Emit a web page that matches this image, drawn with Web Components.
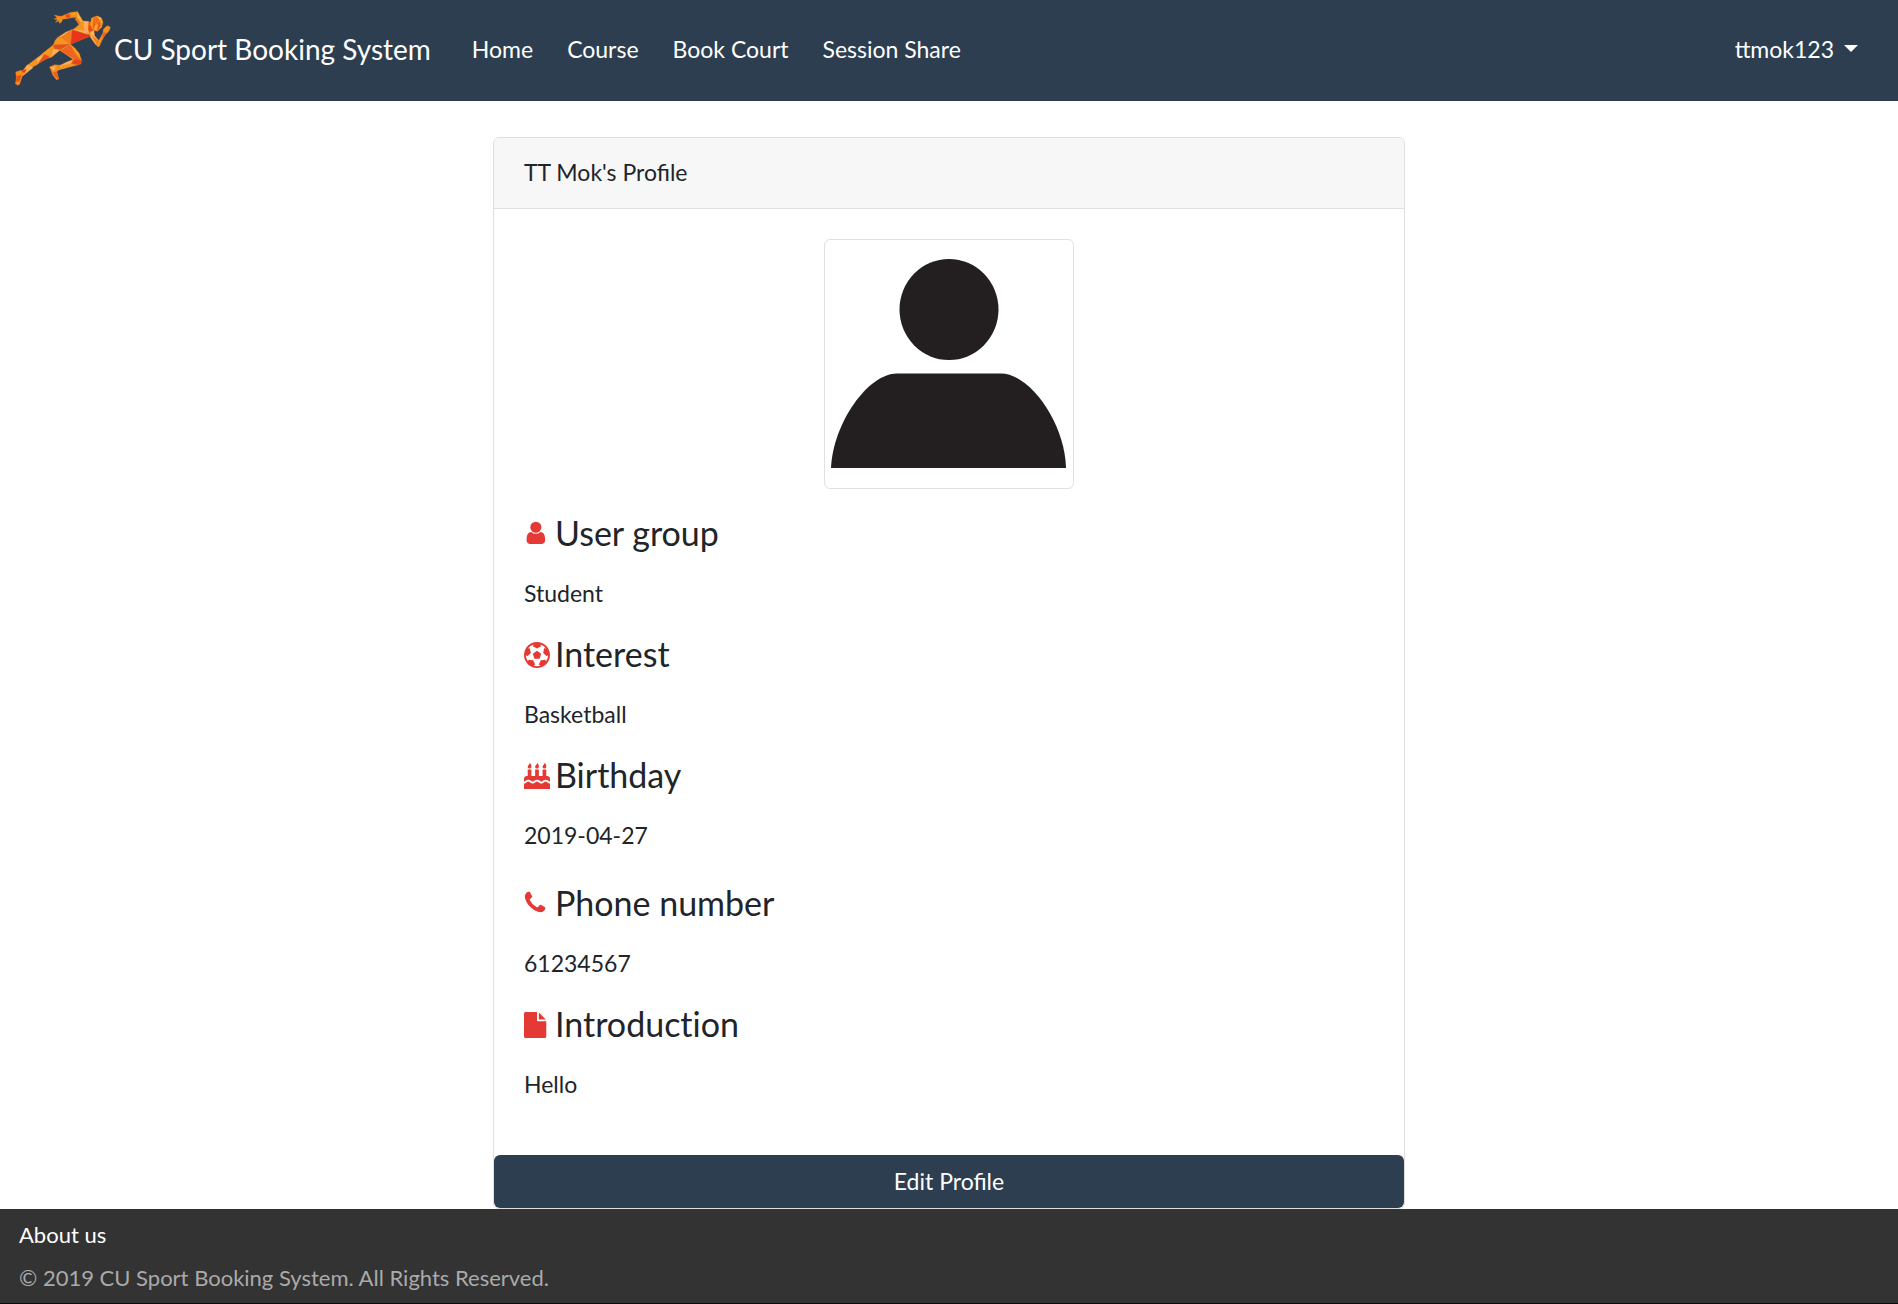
<!DOCTYPE html>
<html lang="en">
<head>
<meta charset="utf-8">
<meta name="viewport" content="width=device-width, initial-scale=1">
<title>CU Sport Booking System</title>
<style>
  body { margin: 0; background: #fff; color: #212529; font: 23px/36px Lato, sans-serif; }
</style>
</head>
<body>
<cu-app></cu-app>

<template id="app-tpl">
  <style>
    :host { display: flex; flex-direction: column; min-height: 100vh; }
    main { flex: 1; display: flex; justify-content: center; padding-top: 36px; }
    profile-card { width: 100%; max-width: 912px; }
  </style>
  <nav-bar user="ttmok123">
    <nav-link href="#home">Home</nav-link>
    <nav-link href="#course">Course</nav-link>
    <nav-link href="#court">Book Court</nav-link>
    <nav-link href="#session">Session Share</nav-link>
  </nav-bar>
  <main>
    <profile-card>
      <span slot="title">TT Mok's Profile</span>
      <user-avatar></user-avatar>
      <profile-group>
        <profile-field icon="user" label="User group">Student</profile-field>
        <profile-field icon="ball" label="Interest">Basketball</profile-field>
        <profile-field icon="cake" label="Birthday">2019-04-27</profile-field>
      </profile-group>
      <profile-group>
        <profile-field icon="phone" label="Phone number">61234567</profile-field>
        <profile-field icon="file" label="Introduction">Hello</profile-field>
      </profile-group>
    </profile-card>
  </main>
  <page-footer></page-footer>
</template>

<template id="nav-tpl">
  <style>
    :host { display: block; background: #2c3e50; color: #fff; }
    nav { display: flex; align-items: center; padding: 0 40px 0 12px; }
    .links { display: flex; flex: 1; gap: 34px; padding: 0 41px; }
    button { display: flex; align-items: center; gap: 10px; border: 0; padding: 0 0 4px; background: none; color: inherit; font: inherit; cursor: pointer; }
    .caret { border: 7px solid transparent; border-top-color: #fff; border-bottom: 0; }
  </style>
  <nav aria-label="Main">
    <brand-logo></brand-logo>
    <div class="links"><slot></slot></div>
    <button type="button" aria-haspopup="true"><span class="name"></span><span class="caret"></span></button>
  </nav>
</template>

<template id="brand-tpl">
  <style>
    :host { display: block; }
    a { display: flex; align-items: center; gap: 2px; color: #fff; font-size: 28px; text-decoration: none; white-space: nowrap; }
    svg { display: block; width: 100px; height: 101px; }
    span { padding-bottom: 4px; }
  </style>
  <a href="#home">
    <svg viewBox="36 0 300 303" aria-hidden="true" stroke-linejoin="round">
      <g stroke="#f58a1f" stroke-width="1">
        <path fill="#f68b1e" d="M232 35L237 43L229 52L211 54L188 58L184 67L178 70L177 63L166 67L173 59L162 57L171 53L163 45L175 48L184 49L208 39Z"/>
        <path fill="#f7a11b" d="M208 39L232 35L222 47Z"/>
        <path fill="#e94e1b" d="M195 45L208 40L212 53L199 55Z"/>
        <path fill="#fbb040" d="M232 35L249 63L246 75L230 53Z"/>
        <path fill="#f47b20" d="M228 50L246 75L240 78L226 58Z"/>
        <path fill="#f9a01b" d="M249 63L270 70L265 83L246 78L222 88Z"/>
        <path fill="#fbb05a" d="M250 63L266 64L272 78L270 106L256 96L246 78Z"/>
        <path fill="#ef4a1b" d="M266 66L276 70L282 84L271 108L264 88Z"/>
        <path fill="#f8a01c" d="M275 54L290 48L303 53L309 66L305 82L292 94L280 91L270 73Z"/>
        <path fill="#f26a1d" d="M280 53L290 50L300 60L290 72L278 67Z"/>
        <path fill="#fbb040" d="M290 48L303 53L307 63L298 59Z"/>
        <path fill="#ed5b1d" d="M278 67L290 72L300 62L303 78L292 93L279 88Z"/>
        <path fill="#f9a53a" d="M286 74L294 72L290 92L281 88Z"/>
        <path fill="#fbb05a" d="M270 96L282 91L284 107L296 121L295 140L286 133L271 112Z"/>
        <path fill="#f47b20" d="M276 107L296 122L294 140Z"/>
        <path fill="#f79020" d="M296 122L309 99L310 88L321 77L331 81L328 91L321 100L313 105L298 139L293 140Z"/>
        <path fill="#f15a22" d="M309 98L321 97L306 120Z"/>
        <path fill="#fbb05a" d="M246 78L265 104L216 89Z"/>
        <path fill="#f7941d" d="M222 88L250 64L252 91Z"/>
        <path fill="#e8341b" d="M216 89L265 104L272 108L211 133Z"/>
        <path fill="#f47b20" d="M216 89L211 133L184 111Z"/>
        <path fill="#fbb05a" d="M216 89L184 111L172 113L198 96Z"/>
        <path fill="#f7941d" d="M184 111L211 133L160 135L165 122L172 113Z"/>
        <path fill="#e94e1b" d="M160 134L211 133L180 150L162 145Z"/>
        <path fill="#fbb05a" d="M211 133L238 162L222 180L180 150Z"/>
        <path fill="#ef6420" d="M211 133L244 180L221 177L180 152Z"/>
        <path fill="#f9a01b" d="M211 133L225 145L238 161L244 180L229 164Z"/>
        <path fill="#e8441b" d="M219 180L244 179L243 192L232 195L213 191Z"/>
        <path fill="#fbb05a" d="M221 178L213 191L198 203L177 209L168 202L200 186Z"/>
        <path fill="#f7941d" d="M213 191L232 195L198 204L180 208L186 197Z"/>
        <path fill="#f58a1f" d="M149 201L164 194L182 196L181 206L170 215L176 237L169 239L159 226Z"/>
        <path fill="#fbb05a" d="M149 201L168 198L163 214Z"/>
        <path fill="#f15a22" d="M159 216L170 215L176 237L165 232Z"/>
        <path fill="#f7941d" d="M160 134L162 146L179 151L155 171L132 178L137 153Z"/>
        <path fill="#fbb05a" d="M160 146L180 150L151 173Z"/>
        <path fill="#f9a01b" d="M160 140L135 166L111 175L132 157Z"/>
        <path fill="#ed4b1b" d="M132 162L150 170L113 192L110 180Z"/>
        <path fill="#fbb05a" d="M111 174L133 163L113 192L90 202Z"/>
        <path fill="#f7941d" d="M110 175L114 192L78 212L83 195Z"/>
        <path fill="#fbb05a" d="M82 194L93 198L99 203L68 228L64 218Z"/>
        <path fill="#e8341b" d="M62 214L80 206L74 219L60 222Z"/>
        <path fill="#f58a1f" d="M47 216L63 211L71 219L66 231L59 253L53 256L46 251L50 235Z"/>
        <path fill="#e94e1b" d="M49 228L65 224L59 244L48 246Z"/>
      </g>
    </svg>
    <span>CU Sport Booking System</span>
  </a>
</template>

<template id="card-tpl">
  <style>
    :host { display: block; box-sizing: border-box; border: 1px solid #dfdfdf; border-radius: 6px; background: #fff; }
    header { padding: 16px 30px 18px; background: #f7f7f7; border-bottom: 1px solid #dfdfdf; border-radius: 5px 5px 0 0; }
    .body { display: flex; flex-direction: column; gap: 29px; padding: 30px 30px 53px; }
    ::slotted(user-avatar) { margin-bottom: -6px; }
    button { display: block; width: 100%; border: 0; border-radius: 6px; padding: 8px 12px 9px; background: #2c3e50; color: #fff; font: inherit; cursor: pointer; }
  </style>
  <header><slot name="title"></slot></header>
  <div class="body"><slot></slot></div>
  <button type="button">Edit Profile</button>
</template>

<template id="avatar-tpl">
  <style>
    :host { display: flex; justify-content: center; }
    svg { display: block; width: 236px; height: 236px; padding: 6px; border: 1px solid #dee2e6; border-radius: 6px; }
  </style>
  <svg viewBox="0 0 236 236" role="img" aria-label="Profile picture" fill="#231f20">
    <ellipse cx="118" cy="63.500" rx="49.500" ry="50.500"/>
    <path d="M0 222C2 177 37 127.500 66 127.500H170C199 127.500 234 177 235 222Z"/>
  </svg>
</template>

<template id="footer-tpl">
  <style>
    :host { display: block; background: #333; border-bottom: 1px solid #0c0c0c; font-size: 22px; }
    footer { display: flex; flex-direction: column; align-items: flex-start; gap: 7px; padding: 8px 19px 7px; }
    a { color: #fff; text-decoration: none; }
    p { margin: 0; color: #aaa; }
  </style>
  <footer>
    <a href="#about">About us</a>
    <p>© 2019 CU Sport Booking System. All Rights Reserved.</p>
  </footer>
</template>

<script>
  const ICONS = {
    user: ['80 80', 'M1536 1399q0 109-62.500 187t-150.500 78h-854q-88 0-150.500-78t-62.500-187q0-85 8.500-160.500t31.500-152 58.500-131 94-89 134.500-34.500q131 128 313 128t313-128q76 0 134.500 34.500t94 89 58.500 131 31.500 152 8.500 160.500zm-256-887q0 159-112.500 271.500t-271.500 112.500-271.500-112.500-112.500-271.500 112.500-271.500 271.500-112.500 271.500 112.500 112.500 271.500z'],
    ball: ['0 0', 'M609 816l287-208 287 208-109 336h-355zm287-816q182 0 348 71t286 191 191 286 71 348-71 348-191 286-286 191-348 71-348-71-286-191-191-286-71-348 71-348 191-286 286-191 348-71zm619 1350q149-203 149-454v-3l-102 89-240-224 63-323 134 12q-150-206-389-282l53 124-287 159-287-159 53-124q-239 76-389 282l135-12 62 323-240 224-102-89v3q0 251 149 454l30-132 326 40 139 298-116 69q117 39 240 39t240-39l-116-69 139-298 326-40z'],
    cake: ['0 0', 'M1792 1408v384h-1792v-384q45 0 85-14t59-27.500 47-37.500q30-27 51.500-38t56.500-11q24 0 44 7t31 15 33 27q29 25 47 38t58 27 86 14q45 0 85-14.500t58-27 48-37.500q21-19 32.500-27t31-15 43.500-7q35 0 56.500 11t51.500 38q28 24 47 37.500t59 27.500 85 14 85-14 59-27.500 47-37.500q30-27 51.500-38t56.500-11q34 0 55.500 11t51.500 38q28 24 47 37.500t59 27.500 85 14zm0-320v192q-24 0-44-7t-31-15-33-27q-29-25-47-38t-58-27-85-14q-46 0-86 14t-58 27-47 38q-22 19-33 27t-31 15-44 7q-35 0-56.500-11t-51.500-38q-29-25-47-38t-58-27-86-14q-45 0-85 14.500t-58 27-48 37.500q-21 19-32.500 27t-31 15-43.500 7q-35 0-56.500-11t-51.500-38q-28-24-47-37.500t-59-27.500-85-14q-46 0-86 14t-58 27-47 38q-22 19-33 27t-31 15-44 7v-192q0-80 56-136t136-56h64v-448h256v448h256v-448h256v448h256v-448h256v448h64q80 0 136 56t56 136z' + [512, 1024, 1536].map(x => `M${x} 224q0 77-36 118.500t-92 41.500q-53 0-90.500-37.500t-37.500-90.500q0-29 9.500-51t23.500-34 31-28 31-31.500 23.500-44.500 9.500-67q38 0 83 74t45 150z`).join('')],
    phone: ['130 80', 'M1600 1240q0 27-10 70.500t-21 68.500q-21 50-122 106-94 51-186 51-27 0-53-3.500t-57.500-12.500-47-14.500-55.500-20.500-49-18q-98-35-175-83-127-79-264-216t-216-264q-48-77-83-175-3-9-18-49t-20.500-55.500-14.500-47-12.500-57.500-3.500-53q0-92 51-186 56-101 106-122 25-11 68.500-21t70.500-10q14 0 21 3 18 6 53 76 11 19 30 54t35 63.500 31 53.500q3 4 17.500 25t21.500 35.500 7 28.500q0 20-28.500 50t-62 55-62 53-28.500 46q0 9 5 22.500t8.500 20.500 14 24 11.500 19q76 137 174 235t235 174q2 1 19 11.500t24 14 20.500 8.500 22.500 5q18 0 46-28.500t53-62 55-62 50-28.500q14 0 28.500 7t35.500 21.500 25 17.500q25 15 53.500 31t63.500 35 54 30q70 35 76 53 3 7 3 21z'],
    file: ['128 0', 'M1152 512v-472q22 14 36 28l408 408q14 14 28 36h-472zm-128 32q0 40 28 68t68 28h544v1056q0 40-28 68t-68 28h-1344q-40 0-68-28t-28-68v-1600q0-40 28-68t68-28h800v544z']
  };

  class Base extends HTMLElement {
    constructor() {
      super();
      const root = this.attachShadow({ mode: 'open' });
      const tpl = document.getElementById(this.constructor.tpl);
      if (tpl) root.append(tpl.content.cloneNode(true));
    }
  }
  const define = (name, tpl, cls = class extends Base {}) => {
    cls.tpl = tpl;
    customElements.define(name, cls);
  };

  define('nav-link', null, class extends Base {
    connectedCallback() {
      this.shadowRoot.innerHTML = `
        <style>
          :host { display: block; padding-bottom: 4px; }
          a { color: #fff; text-decoration: none; white-space: nowrap; }
        </style>
        <a href="${this.getAttribute('href')}"><slot></slot></a>`;
    }
  });
  define('profile-group', null, class extends Base {
    connectedCallback() {
      this.shadowRoot.innerHTML = `
        <style>:host { display: flex; flex-direction: column; gap: 22px; }</style>
        <slot></slot>`;
    }
  });
  define('profile-field', null, class extends Base {
    connectedCallback() {
      const [origin, path] = ICONS[this.getAttribute('icon')];
      this.shadowRoot.innerHTML = `
        <style>
          :host { display: flex; flex-direction: column; gap: 22px; }
          h4 { display: flex; align-items: center; gap: 5px; margin: 0; font-weight: 400; font-size: 34px; line-height: 41px; font-variant-ligatures: none; }
          svg { display: block; width: 26px; height: 26px; padding-top: 3px; fill: #e53935; }
          p { margin: 0; }
        </style>
        <h4><svg viewBox="${origin} 1792 1792" aria-hidden="true"><path d="${path}"/></svg><span>${this.getAttribute('label')}</span></h4>
        <p><slot></slot></p>`;
    }
  });
  define('brand-logo', 'brand-tpl');
  define('nav-bar', 'nav-tpl', class extends Base {
    connectedCallback() {
      this.shadowRoot.querySelector('.name').textContent = this.getAttribute('user');
    }
  });
  define('user-avatar', 'avatar-tpl');
  define('profile-card', 'card-tpl');
  define('page-footer', 'footer-tpl');
  define('cu-app', 'app-tpl');
</script>
</body>
</html>
